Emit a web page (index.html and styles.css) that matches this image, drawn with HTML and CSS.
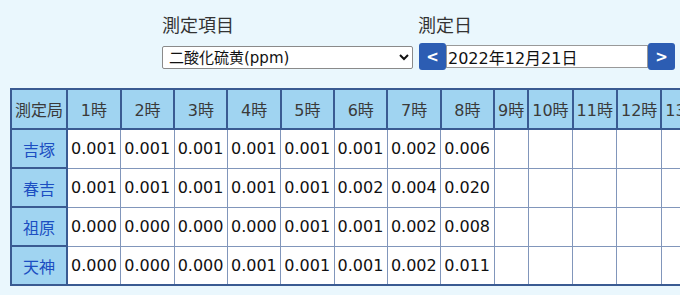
FILE: index.html
```html
<!DOCTYPE html>
<html lang="ja">
<head>
<meta charset="utf-8">
<title>測定結果</title>
<link rel="stylesheet" href="styles.css">
</head>
<body>
<div class="controls">
  <div class="group group-item">
    <div class="label">測定項目</div>
    <div class="field">
      <select class="select">
        <option>二酸化硫黄(ppm)</option>
      </select>
    </div>
  </div>
  <div class="group group-date">
    <div class="label">測定日</div>
    <div class="field date-field">
      <button class="nav">&lt;</button>
      <input class="date" type="text" value="2022年12月21日">
      <button class="nav">&gt;</button>
    </div>
  </div>
</div>
<div class="table-wrap">
<table class="data">
  <thead>
    <tr>
      <th class="st">測定局</th>
      <th>1時</th><th>2時</th><th>3時</th><th>4時</th><th>5時</th><th>6時</th><th>7時</th><th>8時</th>
      <th>9時</th><th>10時</th><th>11時</th><th>12時</th><th>13時</th><th>14時</th>
    </tr>
  </thead>
  <tbody>
    <tr>
      <th class="st"><a href="#">吉塚</a></th>
      <td>0.001</td><td>0.001</td><td>0.001</td><td>0.001</td><td>0.001</td><td>0.001</td><td>0.002</td><td>0.006</td>
      <td></td><td></td><td></td><td></td><td></td><td></td>
    </tr>
    <tr>
      <th class="st"><a href="#">春吉</a></th>
      <td>0.001</td><td>0.001</td><td>0.001</td><td>0.001</td><td>0.001</td><td>0.002</td><td>0.004</td><td>0.020</td>
      <td></td><td></td><td></td><td></td><td></td><td></td>
    </tr>
    <tr>
      <th class="st"><a href="#">祖原</a></th>
      <td>0.000</td><td>0.000</td><td>0.000</td><td>0.000</td><td>0.001</td><td>0.001</td><td>0.002</td><td>0.008</td>
      <td></td><td></td><td></td><td></td><td></td><td></td>
    </tr>
    <tr>
      <th class="st"><a href="#">天神</a></th>
      <td>0.000</td><td>0.000</td><td>0.000</td><td>0.001</td><td>0.001</td><td>0.001</td><td>0.002</td><td>0.011</td>
      <td></td><td></td><td></td><td></td><td></td><td></td>
    </tr>
  </tbody>
</table>
</div>
</body>
</html>
```
FILE: styles.css
```css
html, body {
  margin: 0;
  padding: 0;
  background: #eaf7fd;
  font-family: "DejaVu Sans", "Noto Sans CJK JP", sans-serif;
  color: #222;
  overflow: hidden;
}

.controls {
  display: flex;
  gap: 6px;
  padding-left: 162px;
  padding-top: 11px;
}

.label {
  font-family: "Noto Sans CJK JP", sans-serif;
  font-size: 18px;
  line-height: 26px;
  color: #333;
  height: 32px;
}

.group-date .label {
  margin-left: -1px;
}

.select {
  width: 251px;
  height: 23px;
  margin-top: 3px;
  font-family: "DejaVu Sans", "Noto Sans CJK JP", sans-serif;
  font-size: 15px;
  color: #111;
  background: #fff;
  border: 1px solid #8a8a8a;
  border-radius: 2px;
  padding: 0 2px;
}

.date-field {
  display: flex;
  align-items: center;
}

.nav {
  width: 27px;
  height: 27px;
  padding: 0;
  border: none;
  border-radius: 3px;
  background: #2c5db3;
  color: #fff;
  font-family: "DejaVu Sans", sans-serif;
  font-size: 15px;
  font-weight: bold;
}

.date {
  width: 202px;
  height: 23px;
  box-sizing: border-box;
  margin: 0;
  padding: 0 1px;
  border: 1px solid #999;
  background: #fff;
  font-family: "DejaVu Sans", "Noto Sans CJK JP", sans-serif;
  font-size: 16px;
  color: #111;
}

.table-wrap {
  margin-top: 18px;
  margin-left: 10px;
  overflow: hidden;
}

.data {
  border-collapse: collapse;
  border: 2px solid #3a5b92;
  font-size: 16px;
  white-space: nowrap;
}

.data th {
  background: #a0d4f1;
  border: 2px solid #3a5b92;
  font-weight: normal;
  font-family: "DejaVu Sans", "Noto Sans CJK JP", sans-serif;
  color: #3a3a3a;
  height: 37px;
  padding: 0 3px;
  text-align: center;
}

.data thead th {
  height: 38px;
}

.data th.st {
  padding: 0 3px;
}

.data th a {
  color: #1c4fc2;
  text-decoration: none;
}

.data td {
  background: #fff;
  border: 1px solid #8196bb;
  padding: 0 3.5px 0 3px;
  height: 37px;
  color: #111;
  text-align: left;
}
```
